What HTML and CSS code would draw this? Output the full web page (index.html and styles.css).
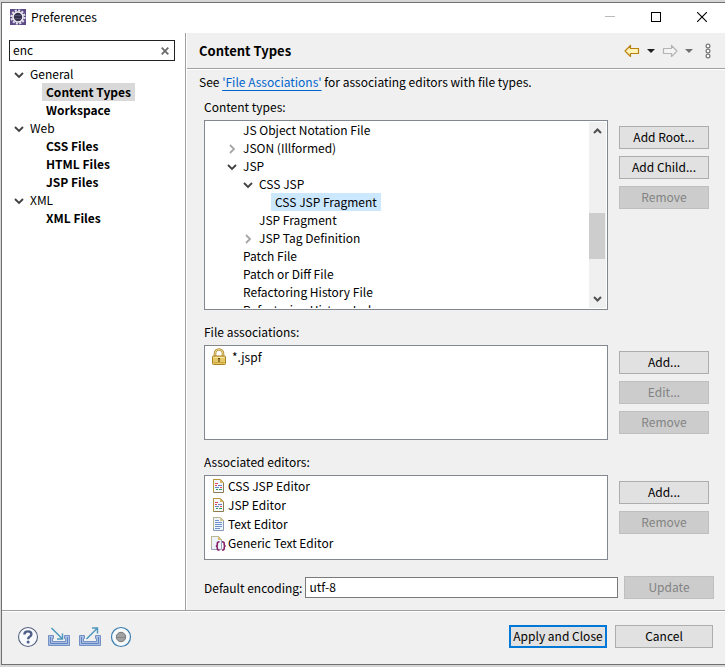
FILE: index.html
```html
<!DOCTYPE html>
<html lang="en">
<head>
    <meta charset="UTF-8">
    <meta name="viewport" content="width=device-width, initial-scale=1.0">
    <title>Preferences</title>
    <link rel="stylesheet" href="styles.css">
</head>
<body>
    <!-- shared icons -->
    <svg class="sprites" width="0" height="0" aria-hidden="true">
        <symbol id="open" viewBox="0 0 10 10"><path d="M1 3 L5 7 L9 3" fill="none" stroke="#404040" stroke-width="1.8"/></symbol>
        <symbol id="closed" viewBox="0 0 10 10"><path d="M3 1 L7 5 L3 9" fill="none" stroke="#a6a6a6" stroke-width="1.8"/></symbol>
        <symbol id="jsp" viewBox="0 0 16 16">
            <path d="M2.5 1.5 H9.5 L12.5 4.5 V14.5 H2.5 Z" fill="#f4f8fd" stroke="#8a7c50"/>
            <path d="M2.5 14 V1.5 H9.5" fill="none" stroke="#b89638"/>
            <path d="M9 1 V5 H13 Z" fill="#d8b860"/>
            <path d="M4 5.5 H7" stroke="#e04858"/>
            <path d="M4 7.5 H6 M9 9.5 H11" stroke="#e04858"/>
            <path d="M7 7.5 H11 M4 9.5 H8" stroke="#6a80c8"/>
            <path d="M5 11.5 H7 M8 11.5 H11" stroke="#2c9a58"/>
        </symbol>
        <symbol id="text" viewBox="0 0 16 16">
            <path d="M2.5 1.5 H9.5 L12.5 4.5 V14.5 H2.5 Z" fill="#eef4fc" stroke="#8b98b4"/>
            <path d="M2.5 12 V1.5 H9.5" fill="none" stroke="#bdb78f"/>
            <path d="M9 1 V5 H13 Z" fill="#d8c88c"/>
            <path d="M4 4.5 H8 M4 6.5 H11 M4 8.5 H11 M4 10.5 H11 M4 12.5 H9" stroke="#6e92cc"/>
        </symbol>
    </svg>

    <div class="window">
        <header class="titlebar">
            <svg class="app-icon" width="16" height="16" viewBox="0 0 16 16">
                <rect width="16" height="16" fill="#5b4a86"/>
                <circle cx="8" cy="8" r="6.6" fill="none" stroke="#e4e2ea" stroke-width="2" stroke-dasharray="2.1 1.35"/>
                <circle cx="8" cy="8" r="5" fill="#35324a" stroke="#f1eff4" stroke-width="1.6"/>
                <path d="M4.5 6.5 H11.5 M4.5 9.5 H11.5" stroke="#56527a"/>
            </svg>
            <h1>Preferences</h1>
            <div class="window-buttons">
                <button aria-label="Minimize"><svg width="10" height="10" viewBox="0 0 10 10"><path d="M0 4.5 H10" stroke="#bbb"/></svg></button>
                <button aria-label="Maximize"><svg width="10" height="10" viewBox="0 0 10 10"><rect x=".5" y=".5" width="9" height="9" fill="none" stroke="#000"/></svg></button>
                <button aria-label="Close"><svg width="10" height="10" viewBox="0 0 10 10"><path d="M0 0 L10 10 M10 0 L0 10" stroke="#000" stroke-width="1.1"/></svg></button>
            </div>
        </header>

        <div class="main">
            <nav class="sidebar">
                <div class="search">
                    <input type="text" value="enc" aria-label="Filter">
                    <button aria-label="Clear"><svg width="8" height="8" viewBox="0 0 8 8"><path d="M.7 .7 L7.3 7.3 M7.3 .7 L.7 7.3" stroke="#6b6b6b" stroke-width="1.8"/></svg></button>
                </div>
                <ul class="nav-tree">
                    <li>
                        <button class="toggle" aria-label="Collapse General"><svg width="10" height="10"><use href="#open"/></svg></button><span>General</span>
                        <ul>
                            <li><a href="#" class="current">Content Types</a></li>
                            <li><a href="#">Workspace</a></li>
                        </ul>
                    </li>
                    <li>
                        <button class="toggle" aria-label="Collapse Web"><svg width="10" height="10"><use href="#open"/></svg></button><span>Web</span>
                        <ul>
                            <li><a href="#">CSS Files</a></li>
                            <li><a href="#">HTML Files</a></li>
                            <li><a href="#">JSP Files</a></li>
                        </ul>
                    </li>
                    <li>
                        <button class="toggle" aria-label="Collapse XML"><svg width="10" height="10"><use href="#open"/></svg></button><span>XML</span>
                        <ul>
                            <li><a href="#">XML Files</a></li>
                        </ul>
                    </li>
                </ul>
            </nav>

            <main class="page">
                <div class="page-header">
                    <h2>Content Types</h2>
                    <div class="tools">
                        <button aria-label="Back"><svg width="16" height="14" viewBox="0 0 16 14"><path d="M1 7 L6.5 1.5 V4.5 H14.5 V9.5 H6.5 V12.5 Z" fill="#fff3b8" stroke="#b9810f" stroke-width="1.2" stroke-linejoin="round"/></svg></button>
                        <button aria-label="Back history"><svg width="8" height="4" viewBox="0 0 8 4"><path d="M0 0 H8 L4 4 Z" fill="#1e1e1e"/></svg></button>
                        <button aria-label="Forward"><svg width="16" height="14" viewBox="0 0 16 14"><path d="M15 7 L9.5 1.5 V4.5 H1.5 V9.5 H9.5 V12.5 Z" fill="#f4f4f4" stroke="#b4b4b4" stroke-width="1.2" stroke-linejoin="round"/></svg></button>
                        <button aria-label="Forward history"><svg width="8" height="4" viewBox="0 0 8 4"><path d="M0 0 H8 L4 4 Z" fill="#707070"/></svg></button>
                        <button class="menu" aria-label="Menu"><svg width="6" height="16" viewBox="0 0 6 16"><g fill="#fff" stroke="#777" stroke-width="1.2"><circle cx="3" cy="3" r="1.9"/><circle cx="3" cy="8" r="1.9"/><circle cx="3" cy="13" r="1.9"/></g></svg></button>
                    </div>
                </div>

                <p class="hint">See <a href="#">'File Associations'</a> for associating editors with file types.</p>

                <section class="group types">
                    <h3>Content types:</h3>
                    <div class="box tree-box">
                        <ul class="type-tree">
                            <li>JS Object Notation File</li>
                            <li><button class="toggle" aria-label="Expand JSON"><svg width="10" height="10"><use href="#closed"/></svg></button>JSON (Illformed)</li>
                            <li><button class="toggle" aria-label="Collapse JSP"><svg width="10" height="10"><use href="#open"/></svg></button>JSP
                                <ul>
                                    <li><button class="toggle" aria-label="Collapse CSS JSP"><svg width="10" height="10"><use href="#open"/></svg></button>CSS JSP
                                        <ul>
                                            <li><span class="selected">CSS JSP Fragment</span></li>
                                        </ul>
                                    </li>
                                    <li>JSP Fragment</li>
                                    <li><button class="toggle" aria-label="Expand JSP Tag Definition"><svg width="10" height="10"><use href="#closed"/></svg></button>JSP Tag Definition</li>
                                </ul>
                            </li>
                            <li>Patch File</li>
                            <li>Patch or Diff File</li>
                            <li>Refactoring History File</li>
                            <li>Refactoring History Index</li>
                        </ul>
                        <div class="scrollbar">
                            <svg width="9" height="6" viewBox="0 0 9 6"><path d="M1 5 L4.5 1.5 L8 5" fill="none" stroke="#505050" stroke-width="2"/></svg>
                            <div class="track"><div class="thumb"></div></div>
                            <svg width="9" height="6" viewBox="0 0 9 6"><path d="M1 1 L4.5 4.5 L8 1" fill="none" stroke="#505050" stroke-width="2"/></svg>
                        </div>
                    </div>
                    <div class="actions">
                        <button class="btn">Add Root...</button>
                        <button class="btn">Add Child...</button>
                        <button class="btn" disabled>Remove</button>
                    </div>
                </section>

                <section class="group">
                    <h3>File associations:</h3>
                    <ul class="box files">
                        <li>
                            <svg width="16" height="18" viewBox="0 0 16 18">
                                <path d="M4 9 V5.5 A4 4 0 0 1 12 5.5 V9" fill="none" stroke="#b08a30" stroke-width="2.6"/>
                                <path d="M4 9 V5.5 A4 4 0 0 1 12 5.5 V9" fill="none" stroke="#f0dc98" stroke-width="1"/>
                                <rect x="1.5" y="8" width="13" height="8.5" rx="1" fill="#e6c765" stroke="#ab8223"/>
                                <path d="M2.5 9.5 H13.5" stroke="#f7e8ae"/>
                                <path d="M2.5 14.5 H13.5" stroke="#cda53d"/>
                                <path d="M7 10.5 H9 M8 10 V14" stroke="#5d4610" stroke-width="1.2"/>
                            </svg>
                            *.jspf
                        </li>
                    </ul>
                    <div class="actions">
                        <button class="btn">Add...</button>
                        <button class="btn" disabled>Edit...</button>
                        <button class="btn" disabled>Remove</button>
                    </div>
                </section>

                <section class="group">
                    <h3>Associated editors:</h3>
                    <ul class="box editors">
                        <li><svg width="16" height="16"><use href="#jsp"/></svg>CSS JSP Editor</li>
                        <li><svg width="16" height="16"><use href="#jsp"/></svg>JSP Editor</li>
                        <li><svg width="16" height="16"><use href="#text"/></svg>Text Editor</li>
                        <li>
                            <svg width="16" height="16" viewBox="0 0 16 16">
                                <path d="M.5 1.5 H7.5 L10.5 4.5 V14.5 H.5 Z" fill="#eef4fc" stroke="#98a2b8"/>
                                <path d="M.5 12 V1.5 H7.5" fill="none" stroke="#bdb78f"/>
                                <path d="M7 1 V5 H11 Z" fill="#d8c070"/>
                                <path d="M8.5 6.8 Q6 6.8 6.3 9 Q6.5 11 4.8 11 Q6.5 11 6.3 13 Q6 15.2 8.5 15.2 M11 6.8 Q13.5 6.8 13.2 9 Q13 11 14.7 11 Q13 11 13.2 13 Q13.5 15.2 11 15.2" fill="none" stroke="#862068" stroke-width="1.6"/>
                            </svg>Generic Text Editor
                        </li>
                    </ul>
                    <div class="actions">
                        <button class="btn">Add...</button>
                        <button class="btn" disabled>Remove</button>
                    </div>
                </section>

                <div class="encoding">
                    <label for="encoding">Default encoding:</label>
                    <input type="text" id="encoding" value="utf-8">
                    <button class="btn" disabled>Update</button>
                </div>
            </main>
        </div>

        <footer class="footer">
            <div class="footer-icons">
                <button aria-label="Help">
                    <svg width="22" height="22" viewBox="0 0 22 22">
                        <circle cx="11" cy="11" r="9.5" fill="#f8f9fc" stroke="#56627f" stroke-width="1.1"/>
                        <path d="M7.4 8.6 Q7.4 5.4 11 5.4 Q14.4 5.4 14.4 8.2 Q14.4 9.7 12.6 10.7 Q11.1 11.6 11.1 13.2" fill="none" stroke="#4d5f89" stroke-width="2.4"/>
                        <circle cx="11.1" cy="16" r="1.5" fill="#4d5f89"/>
                    </svg>
                </button>
                <button aria-label="Import">
                    <svg width="22" height="22" viewBox="0 0 22 22">
                        <path d="M.5 9.5 H5.5 V12.5 H4.5 V15.5 H17.5 V12.5 H16.5 V9.5 H21.5 V19.5 H.5 Z" fill="#a9c0e4" stroke="#7391c4"/>
                        <path d="M2.5 11 V17.5 H19.5 V11" fill="none" stroke="#6384c0"/>
                        <path d="M3.5 2 L14 12.5 M14.5 7.5 V13 H9" fill="none" stroke="#4f98bd" stroke-width="1.5"/>
                    </svg>
                </button>
                <button aria-label="Export">
                    <svg width="22" height="22" viewBox="0 0 22 22">
                        <path d="M.5 9.5 H5.5 V12.5 H4.5 V15.5 H17.5 V12.5 H16.5 V9.5 H21.5 V19.5 H.5 Z" fill="#a9c0e4" stroke="#7391c4"/>
                        <path d="M2.5 11 V17.5 H19.5 V11" fill="none" stroke="#6384c0"/>
                        <path d="M7.5 13 L18 2.5 M13 2 H18.5 V7.5" fill="none" stroke="#4f98bd" stroke-width="1.5"/>
                    </svg>
                </button>
                <button aria-label="Record">
                    <svg width="22" height="22" viewBox="0 0 22 22">
                        <circle cx="11" cy="11" r="9.5" fill="#f6fafd" stroke="#3b7cae" stroke-width="1.2"/>
                        <circle cx="11" cy="11" r="4.7" fill="#a2a2a2" stroke="#767676"/>
                        <path d="M7 11.5 H15" stroke="#868686"/>
                    </svg>
                </button>
            </div>
            <div class="footer-buttons">
                <button class="btn default">Apply and Close</button>
                <button class="btn">Cancel</button>
            </div>
        </footer>
    </div>
</body>
</html>
```
FILE: styles.css
```css
* {
    box-sizing: border-box;
}
body {
    margin: 0;
    padding: 2px 0 3px 1px;
    min-height: 100vh;
    display: flex;
    font-family: "Noto Sans CJK KR", "Noto Sans", sans-serif;
    font-size: 12px;
    line-height: 18px;
    color: #000;
    background: #d6d6d6;
}
ul, h1, h2, h3, p {
    margin: 0;
    padding: 0;
    font-size: 12px;
    font-weight: normal;
    list-style: none;
}
button, input {
    font-family: inherit;
    font-size: 12px;
    color: inherit;
}
button {
    display: flex;
    align-items: center;
    justify-content: center;
    padding: 0;
    border: none;
    background: none;
}
svg {
    display: block;
    flex: none;
}
.sprites {
    position: absolute;
}
.window {
    flex: 1;
    display: flex;
    flex-direction: column;
    border: 1px solid #707070;
    border-right: none;
    background: #f0f0f0;
}

/* title bar */
.titlebar {
    display: flex;
    align-items: center;
    height: 30px;
    padding: 0 0 2px 8px;
    background: #fff;
}
.titlebar h1 {
    flex: 1;
    margin-left: 5px;
}
.window-buttons {
    display: flex;
}
.window-buttons button {
    width: 46px;
    height: 28px;
}

/* left side */
.main {
    flex: 1;
    display: flex;
}
.sidebar {
    width: 184px;
    padding: 7px 10px 0 7px;
    background: #fff;
    border-right: 1px solid #a0a0a0;
}
.search {
    display: flex;
    height: 21px;
    margin-bottom: 4px;
    border: 1px solid #222;
}
.search input {
    flex: 1;
    min-width: 0;
    padding: 0 3px 2px;
    border: none;
    outline: none;
}
.search button {
    width: 18px;
}
.nav-tree > li {
    position: relative;
    padding-left: 21px;
}
.nav-tree ul {
    margin-left: 12px;
}
.nav-tree a {
    display: inline-block;
    padding: 0 4px;
    font-weight: bold;
    color: #000;
    text-decoration: none;
    vertical-align: top;
}
.nav-tree a.current {
    background: #d9d9d9;
}
.toggle {
    position: absolute;
    left: 5px;
    top: 0;
    width: 10px;
    height: 20px;
}

/* right side */
.page {
    flex: 1;
    display: flex;
    flex-direction: column;
    border-left: 1px solid #fff;
}
.page-header {
    display: flex;
    align-items: center;
    justify-content: space-between;
    height: 37px;
    padding: 0 14px 0 12px;
    border-bottom: 1px solid #fff;
    box-shadow: inset 0 -1px #a0a0a0;
}
.page-header h2 {
    font-size: 13px;
    font-weight: bold;
}
.tools {
    display: flex;
    align-items: center;
    gap: 7px;
}
.menu {
    margin-left: 5px;
}
.hint {
    padding: 3px 12px 0;
}
.hint a {
    color: #0066cc;
    text-underline-offset: 3px;
}
.group {
    display: grid;
    grid-template-columns: 1fr 90px;
    grid-template-rows: 22px 1fr;
    column-gap: 11px;
    padding: 0 16px 0 17px;
    margin-bottom: 13px;
}
.group h3 {
    grid-column: 1 / 3;
}
.types {
    flex: 1;
    padding-top: 7px;
}
.box {
    border: 1px solid #828790;
    background: #fff;
}
.tree-box {
    display: flex;
    height: 190px;
    overflow: hidden;
}
.type-tree {
    flex: 1;
    height: 187px;
    padding-left: 22px;
    overflow: hidden;
}
.type-tree li {
    position: relative;
    padding-left: 16px;
}
.type-tree .toggle {
    left: 0;
}
.selected {
    display: inline-block;
    margin-left: -4px;
    padding: 0 4px;
    background: #cce8ff;
    vertical-align: top;
}
.scrollbar {
    display: flex;
    flex-direction: column;
    align-items: center;
    width: 17px;
    margin: 1px;
    padding: 6px 0;
    background: #f0f0f0;
}
.track {
    flex: 1;
    width: 100%;
    margin: 5px 0;
    padding-top: 74px;
}
.thumb {
    height: 46px;
    margin-right: 1px;
    background: #cdcdcd;
}
.files {
    height: 95px;
    padding: 2px 6px;
}
.files li {
    display: flex;
    align-items: center;
    gap: 5px;
}
.editors {
    height: 85px;
    padding: 0 6px;
}
.editors li {
    display: flex;
    align-items: center;
    gap: 1px;
    height: 19px;
}
.actions {
    display: flex;
    flex-direction: column;
    gap: 7px;
    padding-top: 6px;
}
.btn {
    height: 23px;
    padding-bottom: 2px;
    border: 1px solid #adadad;
    background: #e1e1e1;
}
.btn:disabled {
    border-color: #bfbfbf;
    background: #ccc;
    color: #838383;
}
.btn.default {
    border: 2px solid #0078d7;
}
.encoding {
    display: flex;
    align-items: center;
    padding: 3px 11px 11px 17px;
}
.encoding input {
    flex: 1;
    min-width: 0;
    height: 21px;
    margin: 0 6px 0 3px;
    padding: 0 3px 2px;
    border: 1px solid #7a7a7a;
    outline: none;
}
.encoding .btn {
    width: 90px;
}

/* bottom bar */
.footer {
    display: flex;
    align-items: center;
    justify-content: space-between;
    height: 54px;
    padding: 0 12px 2px 15px;
    border-top: 1px solid #a0a0a0;
    box-shadow: inset 0 1px #fff;
}
.footer-icons {
    display: flex;
    gap: 9px;
}
.footer-buttons {
    display: flex;
    gap: 8px;
}
.footer-buttons .btn {
    width: 98px;
}
```
